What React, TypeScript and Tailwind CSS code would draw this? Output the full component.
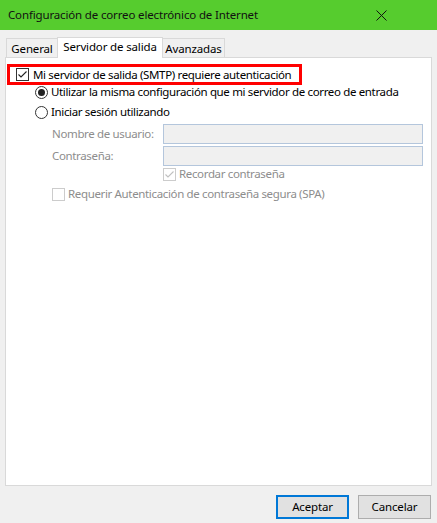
import React from "react";

const font = { fontFamily: '"Noto Sans", "Open Sans", sans-serif' };

function Check({ checked, disabled, className = "" }: { checked?: boolean; disabled?: boolean; className?: string }) {
  return (
    <span
      className={`inline-flex w-[13px] h-[13px] shrink-0 items-center justify-center border bg-white ${
        disabled ? "border-[#cccccc]" : "border-[#333333]"
      } ${className}`}
    >
      {checked && (
        <svg width="11" height="11" viewBox="0 0 11 11">
          <path d="M1.5 5.5 L4 8 L9.5 2.5" fill="none" stroke={disabled ? "#c0c0c0" : "#222"} strokeWidth="1.1" />
        </svg>
      )}
    </span>
  );
}

function Radio({ checked }: { checked?: boolean }) {
  return (
    <span className="inline-flex w-[13px] h-[13px] shrink-0 items-center justify-center rounded-full border border-[#333333] bg-white">
      {checked && <span className="w-[7px] h-[7px] rounded-full bg-[#222]" />}
    </span>
  );
}

export default function App() {
  return (
    <div
      className="w-[437px] h-[523px] bg-[#f0f0f0] flex flex-col text-[11.5px] tracking-[-0.15px] text-black whitespace-nowrap"
      style={font}
    >
      <div className="h-[30px] bg-[#56cc2e] flex items-center pl-[8px] pr-[50px] justify-between shrink-0">
        <span className="text-[#111]">Configuración de correo electrónico de Internet</span>
        <svg width="11" height="11" viewBox="0 0 11 11">
          <path d="M0.5 0.5 L10.5 10.5 M10.5 0.5 L0.5 10.5" stroke="#111" strokeWidth="1" />
        </svg>
      </div>
      <div className="flex items-end pl-[6px] pt-[6px] h-[27px] shrink-0">
        <div className="w-[51px] h-[19px] border border-b-0 border-r-0 border-[#d9d9d9] bg-[#f0f0f0] flex items-center justify-center leading-none pt-[2px]">
          General
        </div>
        <div className="w-[106px] h-[21px] border border-b-0 border-[#d9d9d9] bg-white flex items-center justify-center leading-none -mb-px relative z-10 pb-[2px]">
          Servidor de salida
        </div>
        <div className="w-[62px] h-[19px] border border-b-0 border-l-0 border-[#d9d9d9] bg-[#f0f0f0] flex items-center justify-center leading-none pt-[2px]">
          Avanzadas
        </div>
      </div>
      <div className="mx-[5px] w-[427px] h-[429px] border border-[#d9d9d9] bg-white flex flex-col pt-[6px] pl-[1px] tracking-[-0.35px]">
        <div className="w-[295px] h-[21px] border-[3px] border-[#ff0000] flex items-center pl-[6px] gap-[4px] relative z-10">
          <Check checked />
          <span>Mi servidor de salida (SMTP) requiere autenticación</span>
        </div>
        <div className="pl-[28px] flex items-center gap-[3px] h-[20px] -mt-[3px]">
          <Radio checked />
          <span>Utilizar la misma configuración que mi servidor de correo de entrada</span>
        </div>
        <div className="pl-[28px] flex items-center gap-[3px] h-[20px]">
          <Radio />
          <span>Iniciar sesión utilizando</span>
        </div>
        <div className="flex items-center mt-[2px] h-[20px]">
          <span className="pl-[45px] w-[156px] text-[#8d8d8d]">Nombre de usuario:</span>
          <div className="w-[260px] h-[20px] border border-[#b4c6dc] bg-[#f0f0f0]" />
        </div>
        <div className="flex items-center mt-[2px] h-[20px]">
          <span className="pl-[45px] w-[156px] text-[#8d8d8d]">Contraseña:</span>
          <div className="w-[260px] h-[20px] border border-[#b4c6dc] bg-[#f0f0f0]" />
        </div>
        <div className="flex items-center pl-[156px] gap-[3px] h-[20px] -mt-[2px]">
          <Check checked disabled />
          <span className="text-[#8d8d8d]">Recordar contraseña</span>
        </div>
        <div className="flex items-center pl-[45px] gap-[3px] h-[20px]">
          <Check disabled />
          <span className="text-[#8d8d8d]">Requerir Autenticación de contraseña segura (SPA)</span>
        </div>
      </div>
      <div className="flex justify-end gap-[9px] pr-[6px] mt-[9px]">
        <button className="w-[73px] h-[24px] border-2 border-[#0078d7] bg-[#e1e1e1] leading-none">Aceptar</button>
        <button className="w-[73px] h-[24px] border border-[#adadad] bg-[#e1e1e1] leading-none">Cancelar</button>
      </div>
    </div>
  );
}
